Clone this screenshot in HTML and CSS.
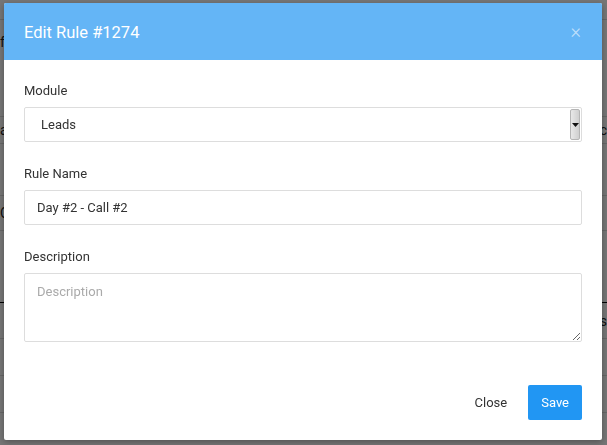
FILE: index.html
```html
<!DOCTYPE html>
<html lang="en">
<head>
    <meta charset="UTF-8">
    <meta name="viewport" content="width=device-width, initial-scale=1.0">
    <title>Edit Rule</title>
    <link rel="stylesheet" href="styles.css">
</head>
<body>
    <div class="backdrop-page">
        <div class="bg-row bg-top"><span class="bg-search">Search</span></div>
        <div class="bg-row bg-f"><span class="bg-cell">f</span></div>
        <div class="bg-row bg-a"><span class="bg-cell">a</span><span class="bg-right">c</span></div>
        <div class="bg-row bg-empty"></div>
        <div class="bg-row bg-c"><span class="bg-cell">C</span></div>
        <div class="bg-row dark"></div>
        <div class="bg-row bg-s"><span></span><span class="bg-right">s</span></div>
        <div class="bg-row"></div>
        <div class="bg-row"></div>
    </div>
    <div class="overlay"></div>

    <div class="modal">
        <div class="modal-header">
            <h4 class="modal-title">Edit Rule #1274</h4>
            <span class="modal-close">&times;</span>
        </div>
        <div class="modal-body">
            <div class="form-group">
                <label class="form-label">Module</label>
                <div class="select-box">
                    <span class="select-value">Leads</span>
                    <span class="select-arrow">
                        <svg width="7" height="4" viewBox="0 0 7 4"><path d="M0 0h7L3.5 4z" fill="#111"/></svg>
                    </span>
                </div>
            </div>
            <div class="form-group">
                <label class="form-label">Rule Name</label>
                <input class="form-control" type="text" value="Day #2 - Call #2">
            </div>
            <div class="form-group">
                <label class="form-label">Description</label>
                <textarea class="form-control textarea" placeholder="Description"></textarea>
            </div>
        </div>
        <div class="modal-footer">
            <button class="btn btn-link">Close</button>
            <button class="btn btn-primary">Save</button>
        </div>
    </div>
</body>
</html>
```

FILE: styles.css
```css
*{
    box-sizing: border-box;
    font-family: Roboto, 'Liberation Sans', sans-serif;
}
body{
    margin: 0;
    padding: 0;
    width: 607px;
    height: 445px;
    overflow: hidden;
    background: #fff;
    color: #333;
}

/* page behind the dialog */
.backdrop-page{
    display: flex;
    flex-direction: column;
}
.bg-row{
    height: 37px;
    border-bottom: 1px solid #ddd;
    display: flex;
    align-items: center;
    justify-content: space-between;
    font-size: 14px;
    color: #222;
    flex-shrink: 0;
}
.bg-top{ height: 20px; align-items: flex-end; }
.bg-f{ height: 97px; align-items: flex-start; padding-top: 14px; }
.bg-a{ height: 27px; }
.bg-empty{ height: 52px; }
.bg-c{ height: 35px; }
.bg-row.dark{ height: 72px; border-bottom-color: #000; }
.bg-s{ height: 36px; }
.bg-search{ margin-left: 133px; line-height: 8px; }

.overlay{
    position: fixed;
    inset: 0;
    background: rgba(0,0,0,0.54);
}

.modal{
    position: fixed;
    left: 4px;
    top: 3px;
    width: 598px;
    height: 437px;
    background: #fff;
    border-radius: 2px;
    box-shadow: 0 2px 6px rgba(0,0,0,0.3);
    display: flex;
    flex-direction: column;
    overflow: hidden;
}
.modal-header{
    height: 57px;
    background: #64b5f6;
    display: flex;
    align-items: center;
    justify-content: space-between;
    padding: 0 20px;
}
.modal-title{
    margin: 0;
    color: #fff;
    font-size: 16.5px;
    font-weight: 400;
    padding-top: 1px;
}
.modal-close{
    color: rgba(255,255,255,0.6);
    font-size: 20px;
    font-weight: 300;
    margin-right: 1px;
    margin-top: -1px;
}

.modal-body{
    padding: 22px 20px 0;
    flex: 1;
}
.form-group{
    margin-bottom: 23px;
}
.form-label{
    display: block;
    font-size: 13px;
    line-height: 18px;
    margin-bottom: 7px;
    color: #333;
}
.form-control, .select-box{
    display: block;
    width: 100%;
    height: 35px;
    border: 1px solid #ddd;
    border-radius: 2px;
    background: #fff;
    font-size: 13px;
    color: #333;
    padding: 0 12px;
    outline: none;
}
.select-box{
    display: flex;
    align-items: center;
    justify-content: space-between;
    padding: 0 1px 0 16px;
}
.select-arrow{
    width: 10px;
    height: 31px;
    background: linear-gradient(to right, #e8e8e8, #cfcfcf);
    border: 1px solid #b5b5b5;
    border-radius: 2px;
    display: flex;
    align-items: center;
    justify-content: center;
}
.textarea{
    height: 69px;
    padding: 10px 12px;
    resize: vertical;
    font-size: 13px;
}
.textarea::placeholder{
    color: #aaa;
}

.modal-footer{
    display: flex;
    justify-content: flex-end;
    align-items: center;
    gap: 8px;
    padding: 0 20px 20px;
}
.btn{
    height: 35px;
    border: none;
    border-radius: 2px;
    font-size: 13px;
    padding: 0 13px;
    cursor: pointer;
}
.btn-link{
    background: transparent;
    color: #333;
}
.btn-primary{
    background: #2196f3;
    color: #fff;
}
```
